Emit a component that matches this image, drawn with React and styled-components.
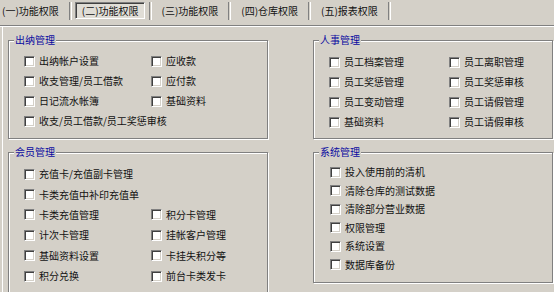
import React from "react";
import styled, { createGlobalStyle } from "styled-components";

const GlobalStyle = createGlobalStyle`
  html, body {
    margin: 0;
    padding: 0;
    background: #d4d0c8;
  }
  body {
    width: 554px;
    height: 292px;
    overflow: hidden;
    font-family: "Noto Sans CJK SC", "Noto Sans", sans-serif;
    font-size: 10px;
    color: #111;
  }
`;

const tabs = ["(一)功能权限", "(二)功能权限", "(三)功能权限", "(四)仓库权限", "(五)报表权限"];

const groups = [
  {
    title: "出纳管理",
    col: 127,
    padTop: 5,
    padBottom: 7,
    padLeft: 15,
    rowH: 20,
    rows: [
      ["出纳帐户设置", "应收款"],
      ["收支管理/员工借款", "应付款"],
      ["日记流水帐簿", "基础资料"],
      ["收支/员工借款/员工奖惩审核", null],
    ],
  },
  {
    title: "人事管理",
    col: 120,
    padTop: 6,
    padBottom: 6,
    padLeft: 15,
    rowH: 20,
    rows: [
      ["员工档案管理", "员工离职管理"],
      ["员工奖惩管理", "员工奖惩审核"],
      ["员工变动管理", "员工请假管理"],
      ["基础资料", "员工请假审核"],
    ],
  },
  {
    title: "会员管理",
    col: 127,
    padTop: 6,
    padBottom: 14,
    padLeft: 15,
    rowH: 20.4,
    rows: [
      ["充值卡/充值副卡管理", null],
      ["卡类充值中补印充值单", null],
      ["卡类充值管理", "积分卡管理"],
      ["计次卡管理", "挂帐客户管理"],
      ["基础资料设置", "卡挂失积分等"],
      ["积分兑换", "前台卡类发卡"],
    ],
  },
  {
    title: "系统管理",
    col: 200,
    padTop: 5,
    padBottom: 8,
    padLeft: 16,
    rowH: 18.5,
    short: true,
    rows: [
      ["投入使用前的清机"],
      ["清除仓库的测试数据"],
      ["清除部分营业数据"],
      ["权限管理"],
      ["系统设置"],
      ["数据库备份"],
    ],
  },
];

export default function App() {
  return (
    <>
      <GlobalStyle />
      <TabBar>
        {tabs.map((t, i) => (
          <React.Fragment key={t}>
            <Tab $active={i === 1}>{t}</Tab>
            <Separator />
          </React.Fragment>
        ))}
      </TabBar>
      <Divider />
      <Page>
        <Groups>
          {groups.map((g) => (
            <GroupBox key={g.title} $short={g.short}>
              <Legend>{g.title}</Legend>
              <Items
                $col={g.col}
                $rowH={g.rowH}
                $padTop={g.padTop}
                $padLeft={g.padLeft}
                $padBottom={g.padBottom}
              >
                {g.rows.flatMap((row, r) =>
                  [0, 1].map((c) =>
                    row[c] ? (
                      <Item key={`${r}-${c}`}>
                        <Check />
                        <span>{row[c]}</span>
                      </Item>
                    ) : (
                      <span key={`${r}-${c}`} />
                    )
                  )
                )}
              </Items>
            </GroupBox>
          ))}
        </Groups>
      </Page>
    </>
  );
}

const TabBar = styled.div`
  display: flex;
  align-items: flex-start;
  height: 25px;
  padding-top: 2px;
  box-sizing: border-box;
`;

const Tab = styled.div`
  height: 17px;
  line-height: 15px;
  padding: 0 5px 0 6px;
  box-sizing: border-box;
  white-space: nowrap;
  border: 1px solid transparent;
  ${(p) =>
    p.$active &&
    `
    border-color: #808080 #fff #fff #808080;
    box-shadow: inset 1px 1px #404040;
    background: #e0ddd6;
  `}
  &:first-child {
    padding-left: 1px;
  }
`;

const Separator = styled.div`
  width: 1px;
  height: 18px;
  margin: 0 3px 0 4px;
  border-left: 1px solid #808080;
  border-right: 1px solid #fff;
`;

const Divider = styled.div`
  height: 0;
  border-top: 1px solid #808080;
  border-bottom: 1px solid #fff;
`;

const Page = styled.div`
  margin-left: 2px;
  border-left: 1px solid #fff;
  padding: 7px 0 0 5px;
`;

const Groups = styled.div`
  display: grid;
  grid-template-columns: 260px 240px;
  column-gap: 45px;
  row-gap: 7px;
`;

const GroupBox = styled.fieldset`
  margin: 0;
  padding: 0;
  min-width: 0;
  border: 1px solid #808080;
  box-shadow: inset 1px 1px #fff, 1px 1px #fff;
  align-self: ${(p) => (p.$short ? "start" : "stretch")};
`;

const Legend = styled.legend`
  margin-left: 5px;
  padding: 0 1px;
  line-height: 12px;
  color: #0a0aa0;
  background: #d4d0c8;
`;

const Items = styled.div`
  display: grid;
  grid-template-columns: ${(p) => p.$col}px auto;
  grid-auto-rows: ${(p) => p.$rowH}px;
  padding: ${(p) => p.$padTop}px 0 ${(p) => p.$padBottom}px ${(p) => p.$padLeft}px;
`;

const Item = styled.label`
  display: flex;
  align-items: center;
  gap: 4px;
  white-space: nowrap;
  line-height: 12px;
`;

const Check = styled.input.attrs({ type: "checkbox" })`
  appearance: none;
  margin: 0;
  width: 11px;
  height: 11px;
  flex: none;
  box-sizing: border-box;
  background: #fff;
  border: 1px solid;
  border-color: #808080 #fff #fff #808080;
  box-shadow: inset 1px 1px #404040, inset -1px -1px #d4d0c8;
`;
